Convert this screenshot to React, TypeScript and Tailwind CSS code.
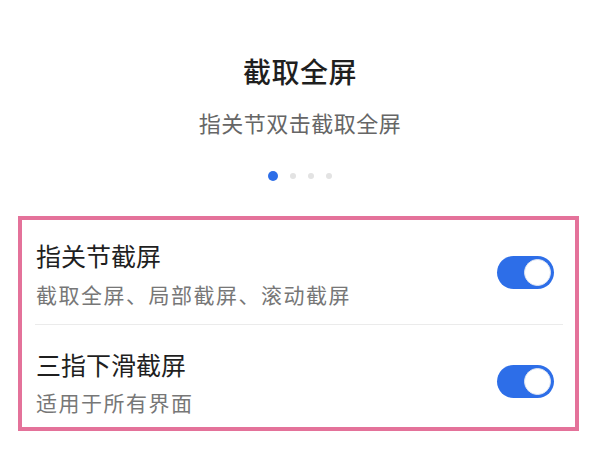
import React from "react";

const font = { fontFamily: '"Noto Sans CJK SC", "Noto Sans", sans-serif' };

function Toggle() {
  return (
    <div className="relative h-[33px] w-[57px] shrink-0 rounded-full bg-[#2d6ee8]">
      <div className="absolute right-[3px] top-[3px] h-[27px] w-[27px] rounded-full border border-[#dfe6f2] bg-white" />
    </div>
  );
}

export default function App() {
  return (
    <div className="h-[450px] w-[600px] overflow-hidden bg-white" style={font}>
      <div className="flex flex-col items-center pt-[53px]">
        <div className="text-[28px] font-medium leading-[36px] tracking-[0.5px] text-[#1f1f1f]">截取全屏</div>
        <div className="mt-[18px] text-[22px] leading-[30px] tracking-[0.5px] text-[#666666]">指关节双击截取全屏</div>
        <div className="mt-[34px] flex items-center gap-[12px]">
          <div className="h-[10px] w-[10px] rounded-full bg-[#2d6ee8]" />
          <div className="h-[6px] w-[6px] rounded-full bg-[#e3e3e3]" />
          <div className="h-[6px] w-[6px] rounded-full bg-[#e3e3e3]" />
          <div className="h-[6px] w-[6px] rounded-full bg-[#e3e3e3]" />
        </div>
      </div>
      <div className="ml-[18px] mt-[35px] h-[215px] w-[561px] border-[4px] border-[#e4729a]">
        <div className="flex items-start pl-[14px] pr-[21px] pt-[19px]">
          <div className="flex-1">
            <div className="text-[25px] leading-[32px] text-[#1f1f1f]">指关节截屏</div>
            <div className="mt-[8px] text-[21px] leading-[30px] tracking-[1.5px] text-[#777777]">截取全屏、局部截屏、滚动截屏</div>
          </div>
          <div className="mt-[17px]">
            <Toggle />
          </div>
        </div>
        <div className="ml-[13px] mr-[12px] mt-[15px] h-px bg-[#ebebeb]" />
        <div className="flex items-start pl-[14px] pr-[21px] pt-[23px]">
          <div className="flex-1">
            <div className="text-[25px] leading-[32px] text-[#1f1f1f]">三指下滑截屏</div>
            <div className="mt-[7px] text-[21px] leading-[30px] tracking-[1.5px] text-[#777777]">适用于所有界面</div>
          </div>
          <div className="mt-[17px]">
            <Toggle />
          </div>
        </div>
      </div>
    </div>
  );
}
